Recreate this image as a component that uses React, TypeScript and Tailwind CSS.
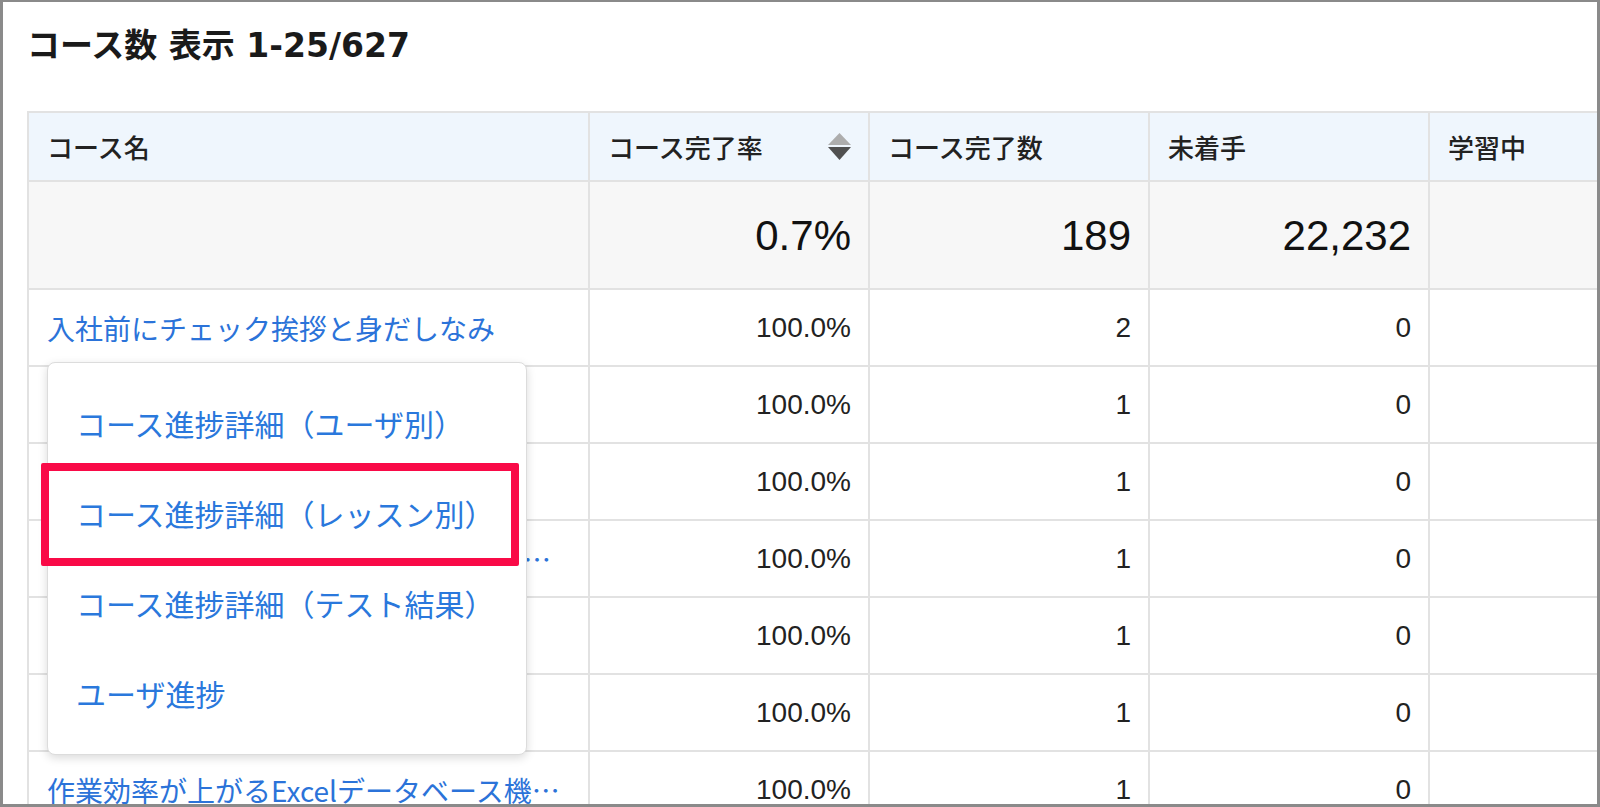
import { useState } from 'react';

type CourseRow = {
  name: string;
  rate: string;
  done: string;
  todo: string;
};

const courseRows: CourseRow[] = [
  { name: '入社前にチェック挨拶と身だしなみ', rate: '100.0%', done: '2', todo: '0' },
  { name: 'ビジネスメールの基本', rate: '100.0%', done: '1', todo: '0' },
  { name: '電話応対の基礎', rate: '100.0%', done: '1', todo: '0' },
  {
    name: 'ビジネスパーソンのための効果的なプレゼンテーション資料作成術',
    rate: '100.0%',
    done: '1',
    todo: '0',
  },
  { name: '報連相の基本', rate: '100.0%', done: '1', todo: '0' },
  { name: '情報セキュリティ入門', rate: '100.0%', done: '1', todo: '0' },
  { name: '作業効率が上がるExcelデータベース機能の使い方', rate: '100.0%', done: '1', todo: '0' },
];

const menuItems = [
  'コース進捗詳細（ユーザ別）',
  'コース進捗詳細（レッスン別）',
  'コース進捗詳細（テスト結果）',
  'ユーザ進捗',
];

function SortIcon() {
  return (
    <svg width="23" height="27" viewBox="0 0 23 27" aria-hidden="true">
      <path d="M11.5 0 L23 12 H0 Z" fill="#adadad" />
      <path d="M0 14 H23 L11.5 27 Z" fill="#505050" />
    </svg>
  );
}

function NumberCell({ value, big }: { value?: string; big?: boolean }) {
  return (
    <div
      className={
        big
          ? 'w-[280px] shrink-0 border-l-2 border-[#e2e2e2] flex items-center justify-end pr-[17px] text-[42px] text-[#111] font-["Liberation_Sans",Arial,sans-serif]'
          : 'w-[280px] shrink-0 border-l-2 border-[#e2e2e2] flex items-center justify-end pr-[17px] text-[28px] text-[#222] font-["Liberation_Sans",Arial,sans-serif]'
      }
    >
      {value}
    </div>
  );
}

export default function App() {
  const [menuOpen] = useState(true);

  return (
    <div className="relative w-[1600px] h-[807px] overflow-hidden bg-white border-[3px] border-t-2 border-[#8a8a8a]">
      <h1 className="h-[109px] pl-[24px] pt-[24px] leading-[40px] text-[33px] font-bold text-[#1a1a1a] font-['DejaVu_Sans','Noto_Sans_CJK_JP',sans-serif]">
        コース数 表示 1-25/627
      </h1>

      <div className="ml-[24px] w-max border-t-2 border-[#e2e2e2]">
        {/* header */}
        <div className="flex h-[69px] border-b-2 border-[#e2e2e2] bg-[#eff6fd] text-[26px] font-medium text-[#222] font-['Noto_Sans_CJK_JP',sans-serif]">
          <div className="w-[561px] shrink-0 border-l-2 border-[#e2e2e2] flex items-center pl-[18px]">コース名</div>
          <div className="w-[280px] shrink-0 border-l-2 border-[#e2e2e2] flex items-center justify-between pl-[18px] pr-[17px]">
            <span>コース完了率</span>
            <SortIcon />
          </div>
          <div className="w-[280px] shrink-0 border-l-2 border-[#e2e2e2] flex items-center pl-[18px]">コース完了数</div>
          <div className="w-[280px] shrink-0 border-l-2 border-[#e2e2e2] flex items-center pl-[18px]">未着手</div>
          <div className="w-[280px] shrink-0 border-l-2 border-[#e2e2e2] flex items-center pl-[18px]">学習中</div>
        </div>

        {/* summary */}
        <div className="flex h-[108px] border-b-2 border-[#e2e2e2] bg-[#f7f7f7]">
          <div className="w-[561px] shrink-0 border-l-2 border-[#e2e2e2]" />
          <NumberCell value="0.7%" big />
          <NumberCell value="189" big />
          <NumberCell value="22,232" big />
          <NumberCell big />
        </div>

        {courseRows.map((row, i) => (
          <div key={i} className="flex h-[77px] border-b-2 border-[#e2e2e2] bg-white">
            <div className="w-[561px] shrink-0 border-l-2 border-[#e2e2e2] flex items-center pl-[18px] pr-[24px] min-w-0">
              <a className="block min-w-0 truncate text-[28px] text-[#2b73d9] font-['Noto_Sans_CJK_JP',sans-serif]">
                {row.name}
              </a>
            </div>
            <NumberCell value={row.rate} />
            <NumberCell value={row.done} />
            <NumberCell value={row.todo} />
            <NumberCell />
          </div>
        ))}
      </div>

      {menuOpen && (
        <ul className="absolute left-[44px] top-[360px] w-[480px] h-[393px] pt-[15px] bg-white border border-[#dcdcdc] rounded-[8px] shadow-[0_3px_10px_rgba(0,0,0,0.15)] font-['Noto_Sans_CJK_JP',sans-serif]">
          {menuItems.map((item) => (
            <li key={item} className="h-[90px] flex items-center pl-[28px] text-[30px] text-[#2a78dc]">
              {item}
            </li>
          ))}
        </ul>
      )}

      {/* highlight annotation */}
      <div className="absolute left-[38px] top-[461px] w-[478px] h-[103px] border-[8px] border-[#f90a47] rounded-[2px]" />
    </div>
  );
}
